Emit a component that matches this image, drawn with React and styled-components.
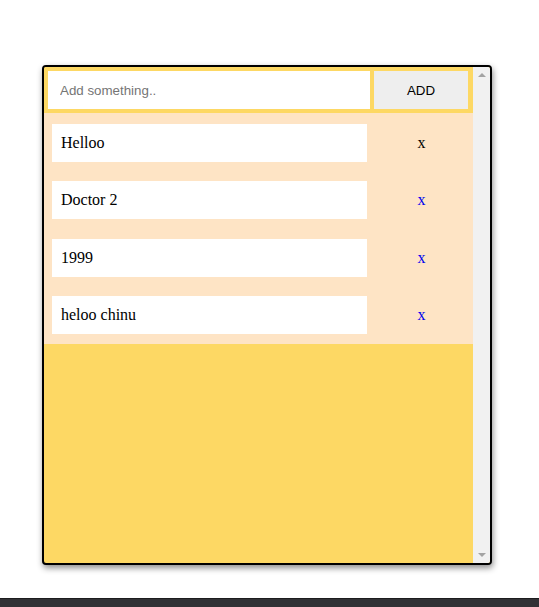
import React, { useState } from 'react';
import styled, { createGlobalStyle } from 'styled-components';

const GlobalStyle = createGlobalStyle`
  html, body {
    margin: 0;
    padding: 0;
    background: #ffffff;
  }
  body {
    height: 607px;
    overflow: hidden;
  }
`

const Page = styled.div`
  display: flex;
  flex-direction: column;
  height: 607px;
  padding-top: 65px;
  box-sizing: border-box;
`

const Card = styled.div`
  margin-left: 42px;
  width: 450px;
  height: 500px;
  box-sizing: border-box;
  border: 2px solid #000;
  border-radius: 4px;
  background: #fdd864;
  box-shadow: 1px 3px 6px rgb(0 0 0 / 45%);
  display: flex;
  overflow: hidden;
`

const Content = styled.div`
  flex: 1;
  display: flex;
  flex-direction: column;
`

const Form = styled.form`
  display: flex;
  gap: 4px;
  padding: 4px 5px 4px 4px;
  background: #fdd864;
  margin: 0;
`

const Input = styled.input`
  flex: 1;
  height: 38px;
  box-sizing: border-box;
  border: none;
  outline: none;
  padding: 0 12px;
  font-family: "Liberation Sans", Arial, sans-serif;
  font-size: 13.333px;
  background: #fff;
  &::placeholder {
    color: #757575;
  }
`

const AddButton = styled.button`
  width: 94px;
  height: 38px;
  border: none;
  background: #eeeeee;
  font-family: "Liberation Sans", Arial, sans-serif;
  font-size: 13.333px;
  color: #000;
  padding: 0;
  cursor: pointer;
`

const List = styled.ul`
  list-style: none;
  margin: 0;
  padding: 11px 0 10px 8px;
  background: #fee4c5;
  display: flex;
  flex-direction: column;
  gap: 19.3px;
`

const Row = styled.li`
  display: flex;
  align-items: center;
`

const ItemText = styled.div`
  width: 315px;
  height: 38px;
  box-sizing: border-box;
  background: #fff;
  padding-left: 9px;
  display: flex;
  align-items: center;
  font-family: "Liberation Serif", "Times New Roman", serif;
  font-size: 16px;
  color: #000;
`

const Remove = styled.span`
  flex: 1;
  text-align: center;
  padding-left: 3px;
  font-family: "Liberation Serif", "Times New Roman", serif;
  font-size: 16px;
  color: ${({ link }) => (link ? '#0000ee' : '#000')};
  cursor: pointer;
`

const Scrollbar = styled.div`
  width: 17px;
  background: #f1f1f1;
  display: flex;
  flex-direction: column;
  justify-content: space-between;
  align-items: center;
  padding: 6px 0;
  box-sizing: border-box;
`

const Arrow = styled.div`
  width: 0;
  height: 0;
  border-left: 4px solid transparent;
  border-right: 4px solid transparent;
  ${({ down }) =>
    down
      ? 'border-top: 4px solid #a3a3a3;'
      : 'border-bottom: 4px solid #a3a3a3;'}
`

const Footer = styled.div`
  margin-top: auto;
  height: 8px;
  background: #313135;
  border-top: 1px solid #1c1c1e;
`

const App = () => {
  const [items] = useState(['Helloo', 'Doctor 2', '1999', 'heloo chinu']);
  return (
    <Page>
      <GlobalStyle />
      <Card>
        <Content>
          <Form onSubmit={(e) => e.preventDefault()}>
            <Input type="text" placeholder="Add something.." />
            <AddButton type="submit">ADD</AddButton>
          </Form>
          <List>
            {items.map((item, i) => (
              <Row key={item}>
                <ItemText>{item}</ItemText>
                <Remove link={i > 0}>x</Remove>
              </Row>
            ))}
          </List>
        </Content>
        <Scrollbar>
          <Arrow />
          <Arrow down />
        </Scrollbar>
      </Card>
      <Footer />
    </Page>
  )
}

export default App
